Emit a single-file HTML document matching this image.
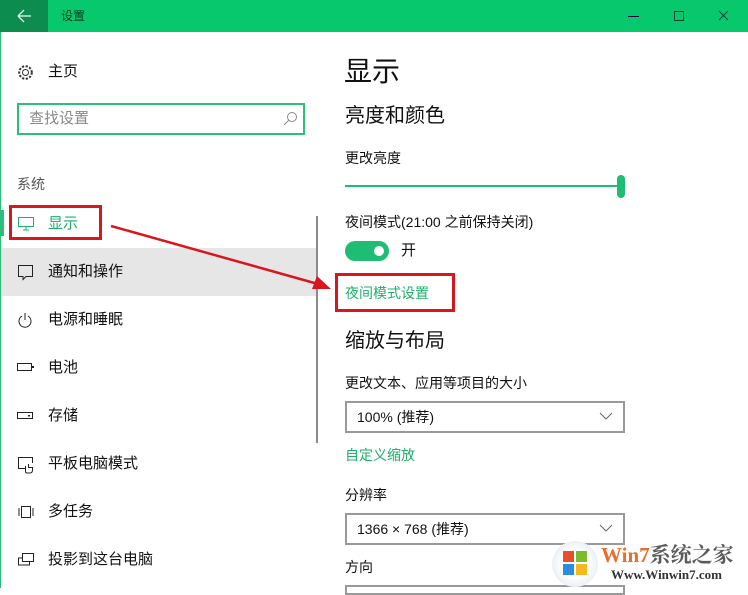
<!DOCTYPE html>
<html><head><meta charset="utf-8">
<style>
*{margin:0;padding:0;box-sizing:border-box}
body{width:748px;height:588px;overflow:hidden;background:#fff;position:relative;font-family:"Liberation Sans","Noto Sans CJK SC",sans-serif;color:#111}
.a{position:absolute;white-space:nowrap}
.t{font-size:15px;line-height:20px}
.g{color:#1fae6b}
.dd{position:absolute;left:345px;width:280px;height:32px;border:2px solid #999;font-size:14px;line-height:28px;padding-left:10px}
.dd svg{position:absolute;right:10px;top:9px}
</style></head><body>
<div class="a" style="left:0;top:0;width:748px;height:32px;background:#07c86c"></div>
<div class="a" style="left:0;top:0;width:48px;height:32px;background:#0c8c4e"></div>
<svg class="a" style="left:16px;top:8px" width="16" height="16"><path d="M2 8H15M2 8L8 2M2 8L8 14" stroke="#e8fff0" stroke-width="1.3" fill="none"/></svg>
<div class="a" style="left:61px;top:7px;font-size:12px;line-height:18px;color:#0a3a20">设置</div>
<svg class="a" style="left:620px;top:8px" width="120" height="16"><path d="M8 8.5H19" stroke="#103" stroke-width="1"/><rect x="54.5" y="3.5" width="9" height="9" stroke="#143" fill="none"/><path d="M99 3L108 12M108 3L99 12" stroke="#143" stroke-width="1"/></svg>
<div class="a" style="left:0;top:32px;width:1px;height:556px;background:#2bbf78"></div>
<!-- left nav -->
<svg class="a" style="left:17px;top:64px" width="17" height="17" viewBox="0 0 17 17"><circle cx="8.5" cy="8.5" r="3" stroke="#333" fill="none"/><circle cx="8.5" cy="8.5" r="6.3" stroke="#333" stroke-dasharray="2.2 1.5" stroke-width="2" fill="none"/></svg>
<div class="a t" style="left:48px;top:62px">主页</div>
<div class="a" style="left:17px;top:103px;width:288px;height:32px;border:2px solid #2bbf78"></div>
<div class="a" style="left:29px;top:109px;font-size:15px;line-height:20px;color:#888">查找设置</div>
<svg class="a" style="left:282px;top:111px" width="16" height="16"><circle cx="10" cy="6" r="4.5" stroke="#888" fill="none"/><path d="M7 9L2 14" stroke="#888"/></svg>
<div class="a" style="left:17px;top:174px;font-size:14px;color:#555">系统</div>
<div class="a" style="left:0;top:210px;width:4px;height:26px;background:#2bbf78"></div>
<svg class="a" style="left:17px;top:216px" width="18" height="16"><rect x="1.5" y="1.5" width="15" height="9" stroke="#1fae6b" fill="none"/><path d="M9 11V14M6 14H12" stroke="#1fae6b"/></svg>
<div class="a t g" style="left:48px;top:214px">显示</div>
<div class="a" style="left:9px;top:205px;width:93px;height:35px;border:3px solid #d8161e"></div>
<div class="a" style="left:1px;top:248px;width:316px;height:48px;background:#e6e6e6"></div>
<svg class="a" style="left:17px;top:264px" width="18" height="18"><path d="M1.5 1.5H15.5V12.5H9L6 15.5V12.5H1.5Z" stroke="#222" fill="none"/></svg>
<div class="a t" style="left:48px;top:262px">通知和操作</div>
<svg class="a" style="left:17px;top:312px" width="16" height="17"><path d="M5 4A6 6 0 1 0 11 4" stroke="#222" fill="none"/><path d="M8 1V8" stroke="#222"/></svg>
<div class="a t" style="left:48px;top:310px">电源和睡眠</div>
<svg class="a" style="left:17px;top:362px" width="18" height="12"><rect x="0.5" y="1.5" width="14" height="7" stroke="#222" fill="none"/><rect x="15" y="4" width="2" height="2" fill="#222"/></svg>
<div class="a t" style="left:48px;top:358px">电池</div>
<svg class="a" style="left:17px;top:411px" width="18" height="10"><rect x="0.5" y="1.5" width="15" height="6" stroke="#222" fill="none"/><rect x="11" y="4" width="2" height="1.5" fill="#222"/></svg>
<div class="a t" style="left:48px;top:406px">存储</div>
<svg class="a" style="left:17px;top:456px" width="18" height="18"><path d="M9 12.5H1.5V1.5H15.5V7" stroke="#222" fill="none"/><path d="M8.5 10V15.5Q8.5 17 10 17H13Q15.5 17 15.5 14V11.5H11.5V8" stroke="#222" fill="none"/></svg>
<div class="a t" style="left:48px;top:454px">平板电脑模式</div>
<svg class="a" style="left:17px;top:505px" width="18" height="14"><rect x="4.5" y="1.5" width="9" height="11" stroke="#222" fill="none"/><path d="M2 3V11M16 3V11" stroke="#222"/></svg>
<div class="a t" style="left:48px;top:502px">多任务</div>
<svg class="a" style="left:17px;top:552px" width="18" height="16"><rect x="5.5" y="1.5" width="11" height="8" stroke="#222" fill="none"/><path d="M5.5 6H1.5V13H12.5V9.5" stroke="#222" fill="none"/></svg>
<div class="a t" style="left:48px;top:550px">投影到这台电脑</div>
<div class="a" style="left:316px;top:216px;width:2px;height:227px;background:#8a8a8a"></div>
<!-- right -->
<div class="a" style="left:344px;top:53px;font-size:28px;line-height:38px">显示</div>
<div class="a" style="left:345px;top:103px;font-size:20px;line-height:26px">亮度和颜色</div>
<div class="a" style="left:345px;top:149px;font-size:14px;line-height:18px">更改亮度</div>
<div class="a" style="left:345px;top:185px;width:276px;height:2px;background:#1fbd74"></div>
<div class="a" style="left:617px;top:175px;width:8px;height:23px;border-radius:4px;background:#1fbd74"></div>
<div class="a" style="left:345px;top:213px;font-size:14px;line-height:18px">夜间模式(21:00 之前保持关闭)</div>
<div class="a" style="left:345px;top:241px;width:44px;height:20px;border-radius:10px;background:#1fbd74"></div>
<div class="a" style="left:374px;top:246px;width:10px;height:10px;border-radius:5px;background:#fff"></div>
<div class="a" style="left:401px;top:242px;font-size:15px;line-height:18px">开</div>
<div class="a g" style="left:345px;top:284px;font-size:14px;line-height:18px">夜间模式设置</div>
<div class="a" style="left:335px;top:273px;width:120px;height:39px;border:3px solid #d8161e"></div>
<div class="a" style="left:345px;top:328px;font-size:20px;line-height:26px">缩放与布局</div>
<div class="a" style="left:345px;top:374px;font-size:14px;line-height:18px">更改文本、应用等项目的大小</div>
<div class="dd" style="top:401px">100% (推荐)<svg width="14" height="9"><path d="M1 1L7 7L13 1" stroke="#666" fill="none"/></svg></div>
<div class="a g" style="left:345px;top:446px;font-size:14px;line-height:18px">自定义缩放</div>
<div class="a" style="left:345px;top:486px;font-size:14px;line-height:18px">分辨率</div>
<div class="dd" style="top:513px">1366 × 768 (推荐)<svg width="14" height="9"><path d="M1 1L7 7L13 1" stroke="#666" fill="none"/></svg></div>
<div class="a" style="left:345px;top:558px;font-size:14px;line-height:18px">方向</div>
<div class="dd" style="top:585px;height:10px"></div>
<!-- arrow -->
<svg class="a" style="left:0;top:0" width="748" height="588"><path d="M111 226L318 284" stroke="#d8161e" stroke-width="2.5"/><path d="M331 289L312 289L317 276Z" fill="#d8161e"/></svg>
<!-- watermark -->
<div class="a" style="left:552px;top:541px;width:46px;height:46px;border-radius:23px;background:radial-gradient(circle,#fff 40%,#e8eef4 75%,#c8d2dc);"></div>
<div class="a" style="left:563px;top:551px;width:11px;height:11px;background:#e84d2c"></div><div class="a" style="left:576px;top:551px;width:11px;height:11px;background:#7cbb2c"></div>
<div class="a" style="left:563px;top:564px;width:11px;height:11px;background:#2a8de0"></div><div class="a" style="left:576px;top:564px;width:11px;height:11px;background:#f5b820"></div>
<div class="a" style="left:601px;top:543px;font-size:21px;line-height:24px;font-weight:bold;font-family:'Liberation Serif','Noto Serif CJK SC',serif"><span style="color:#e8702a">Win7</span><span style="color:#5a5a5a">系统之家</span></div>
<div class="a" style="left:611px;top:567px;font-size:13px;line-height:16px;font-weight:bold;color:#333;font-family:'Liberation Serif',serif">Www.Winwin7.com</div>
</body></html>
